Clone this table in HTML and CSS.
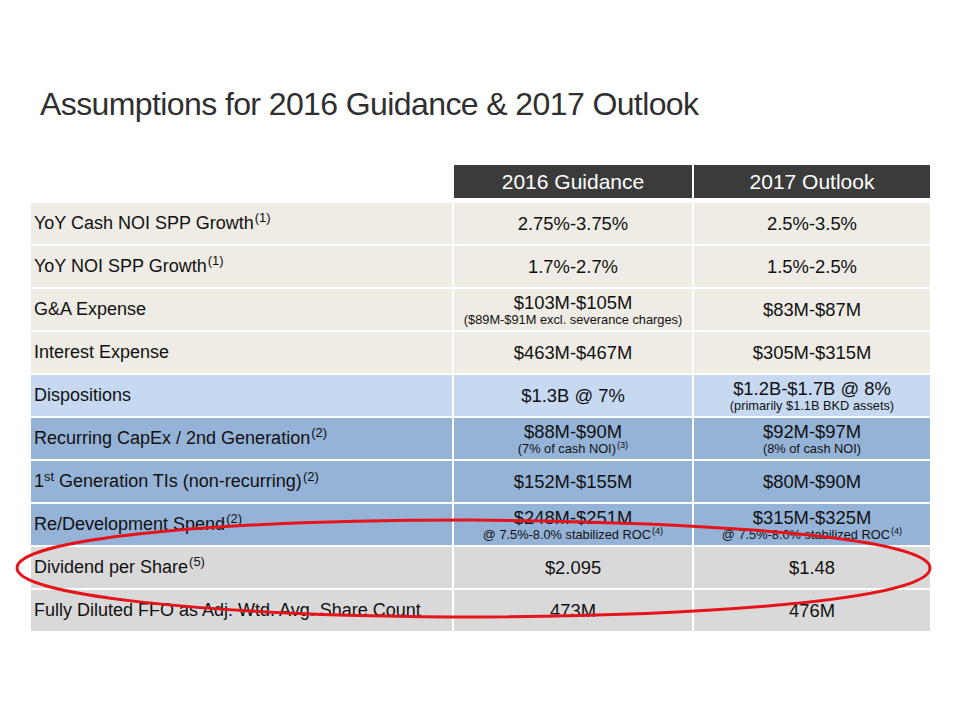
FILE: index.html
```html
<!DOCTYPE html>
<html>
<head>
<meta charset="utf-8">
<link rel="stylesheet" href="styles.css">
</head>
<body>
<div class="slide">
  <h1 class="title">Assumptions for 2016 Guidance &amp; 2017 Outlook</h1>
  <div class="table">
    <div class="blank"></div>
    <div class="head">2016 Guidance</div>
    <div class="head">2017 Outlook</div>

    <div class="lab beige">YoY Cash NOI SPP Growth<sup>(1)</sup></div>
    <div class="val beige">2.75%-3.75%</div>
    <div class="val beige">2.5%-3.5%</div>

    <div class="lab beige">YoY NOI SPP Growth<sup>(1)</sup></div>
    <div class="val beige">1.7%-2.7%</div>
    <div class="val beige">1.5%-2.5%</div>

    <div class="lab beige">G&amp;A Expense</div>
    <div class="val beige"><span class="main">$103M-$105M</span><span class="sub">($89M-$91M excl. severance charges)</span></div>
    <div class="val beige">$83M-$87M</div>

    <div class="lab beige">Interest Expense</div>
    <div class="val beige">$463M-$467M</div>
    <div class="val beige">$305M-$315M</div>

    <div class="lab light">Dispositions</div>
    <div class="val light">$1.3B @ 7%</div>
    <div class="val light"><span class="main">$1.2B-$1.7B @ 8%</span><span class="sub">(primarily $1.1B BKD assets)</span></div>

    <div class="lab blue">Recurring CapEx / 2nd Generation<sup>(2)</sup></div>
    <div class="val blue"><span class="main">$88M-$90M</span><span class="sub">(7% of cash NOI)<sup>(3)</sup></span></div>
    <div class="val blue"><span class="main">$92M-$97M</span><span class="sub">(8% of cash NOI)</span></div>

    <div class="lab blue"><span>1<sup class="st">st</sup>&nbsp;Generation TIs (non-recurring)<sup>(2)</sup></span></div>
    <div class="val blue">$152M-$155M</div>
    <div class="val blue">$80M-$90M</div>

    <div class="lab blue">Re/Development Spend<sup>(2)</sup></div>
    <div class="val blue"><span class="main">$248M-$251M</span><span class="sub">@ 7.5%-8.0% stabilized ROC<sup>(4)</sup></span></div>
    <div class="val blue"><span class="main">$315M-$325M</span><span class="sub">@ 7.5%-8.0% stabilized ROC<sup>(4)</sup></span></div>

    <div class="lab grey">Dividend per Share<sup>(5)</sup></div>
    <div class="val grey">$2.095</div>
    <div class="val grey">$1.48</div>

    <div class="lab grey">Fully Diluted FFO as Adj. Wtd. Avg. Share Count</div>
    <div class="val grey">473M</div>
    <div class="val grey">476M</div>
  </div>
  <svg class="ring" width="960" height="720" viewBox="0 0 960 720">
    <path d="M 17 568 C 17 540, 200 520, 470 520 C 740 522, 930 540, 930 568 C 930 600, 700 617, 450 617 C 200 615, 17 595, 17 568 Z" fill="none" stroke="#e5141b" stroke-width="3"/>
  </svg>
</div>
</body>
</html>
```
FILE: styles.css
```css
html, body {
  margin: 0;
  padding: 0;
  background: #ffffff;
}
.slide {
  position: relative;
  width: 960px;
  height: 720px;
  overflow: hidden;
  font-family: "Liberation Sans", Arial, sans-serif;
  color: #111111;
}
.title {
  margin: 0;
  padding: 86px 0 0 40px;
  height: 165px;
  box-sizing: border-box;
  font-weight: normal;
  font-size: 32px;
  line-height: 36px;
  letter-spacing: -0.6px;
  color: #2f2f2f;
  white-space: nowrap;
}
.table {
  margin: 0 0 0 31px;
  display: grid;
  grid-template-columns: 421px 238px 236px;
  grid-template-rows: 36px repeat(10, 41px);
  column-gap: 2px;
  row-gap: 2px;
  width: 899px;
}
.table > .blank {
  margin-bottom: 3px;
}
.head {
  background: #3b3b3b;
  color: #ffffff;
  font-size: 21px;
  display: flex;
  align-items: center;
  justify-content: center;
  margin-bottom: 3px;
}
.lab {
  display: flex;
  align-items: center;
  padding-left: 3px;
  font-size: 18px;
  white-space: nowrap;
}
.val {
  display: flex;
  flex-direction: column;
  align-items: center;
  justify-content: center;
  font-size: 18.4px;
  white-space: nowrap;
}
.main {
  line-height: 19px;
}
.sub {
  font-size: 12.8px;
  line-height: 15px;
}
sup {
  font-size: 0.72em;
  vertical-align: 0;
  position: relative;
  top: -0.45em;
  line-height: 0;
  margin-left: 1px;
}
.sub sup {
  font-size: 0.72em;
}
sup.st {
  margin-left: 0;
}
.beige { background: #eeece4; }
.light { background: #c6d9f1; }
.blue { background: #95b3d7; }
.grey { background: #d9d9d9; }
.ring {
  position: absolute;
  left: 0;
  top: 0;
  pointer-events: none;
}
```
